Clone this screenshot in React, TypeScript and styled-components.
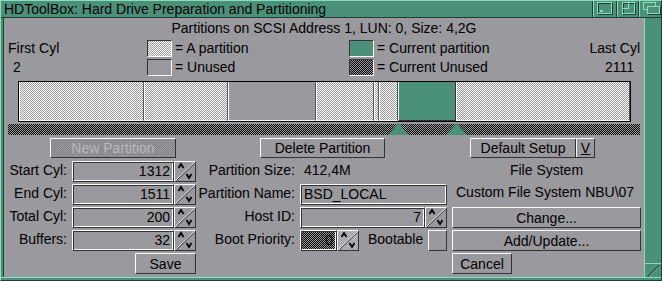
import { Fragment } from 'react';
import styled, { createGlobalStyle, css } from 'styled-components';

const GREY = '#9a999e';
const GREEN = '#4b917a';
const LIGHT = '#8adcbd';
const DARK = '#1f3f34';
const SHADE = '#333333';

const checker = (a: string, b: string) =>
  `repeating-conic-gradient(${a} 0 25%, ${b} 0 50%) 0 0 / 2px 2px`;

const raised = css`
  border-top: 1px solid #fff;
  border-left: 1px solid #fff;
  border-right: 1px solid ${SHADE};
  border-bottom: 1px solid ${SHADE};
`;

const sunken = css`
  border-top: 1px solid ${SHADE};
  border-left: 1px solid ${SHADE};
  border-right: 1px solid #fff;
  border-bottom: 1px solid #fff;
`;

const GlobalStyle = createGlobalStyle`
  body { margin: 0; background: ${GREY}; }
  * { box-sizing: border-box; }
`;

const Window = styled.div`
  width: 662px;
  height: 281px;
  display: flex;
  flex-direction: column;
  background: ${GREEN};
  border-top: 1px solid ${LIGHT};
  border-left: 1px solid ${LIGHT};
  border-right: 1px solid ${DARK};
  border-bottom: 1px solid ${DARK};
  font-family: 'Liberation Sans', Arial, sans-serif;
  font-size: 14px;
  color: #000;
  overflow: hidden;
`;

const TitleBar = styled.div`
  height: 17px;
  display: flex;
  border-bottom: 1px solid ${DARK};
`;

const Title = styled.div`
  flex: 1;
  padding-left: 3px;
  line-height: 16px;
  white-space: nowrap;
`;

const Gadget = styled.div<{ $w: number }>`
  width: ${(p) => p.$w}px;
  height: 16px;
  border-left: 1px solid ${LIGHT};
  box-shadow: -1px 0 0 ${DARK};
  display: flex;
  align-items: center;
  justify-content: center;
`;

const Middle = styled.div`
  display: flex;
  height: 259px;
`;

const LeftBorder = styled.div`
  width: 3px;
  border-right: 1px solid ${DARK};
`;

const RightBorder = styled.div`
  width: 17px;
  border-left: 1px solid ${LIGHT};
  display: flex;
  flex-direction: column;
  justify-content: flex-end;
`;

const SizeGadget = styled.div`
  height: 14px;
  border-top: 1px solid ${LIGHT};
`;

const BottomBorder = styled.div`
  height: 3px;
  border-top: 1px solid ${LIGHT};
`;

const Content = styled.div`
  width: 640px;
  background: ${GREY};
  display: flex;
  flex-direction: column;
`;

const Header = styled.div`
  height: 21px;
  line-height: 21px;
  text-align: center;
  white-space: nowrap;
`;

const Legend = styled.div`
  display: grid;
  grid-template-columns: 143px 202px 1fr auto;
  grid-auto-rows: 19px;
  line-height: 19px;
  height: 38px;
`;

const EndLabel = styled.div<{ $pad: number; $right?: boolean }>`
  padding-left: ${(p) => (p.$right ? 0 : p.$pad)}px;
  padding-right: ${(p) => (p.$right ? p.$pad : 0)}px;
  text-align: ${(p) => (p.$right ? 'right' : 'left')};
`;

const LegendItem = styled.div`
  display: flex;
  align-items: center;
  gap: 3px;
  white-space: nowrap;
`;

type Kind = 'part' | 'free' | 'current' | 'currentFree';

const fills: Record<Kind, string> = {
  part: checker('#fff', GREY),
  free: GREY,
  current: GREEN,
  currentFree: checker('#000', GREY),
};

const Swatch = styled.div<{ $kind: Kind }>`
  width: 25px;
  height: 17px;
  ${sunken}
  background: ${(p) => fills[p.$kind]};
`;

const Bar = styled.div`
  margin: 4px 0 0 14px;
  width: 613px;
  height: 41px;
  border: 1px solid #000;
  display: flex;
`;

const Segment = styled.div<{ $kind: Kind }>`
  height: 39px;
  flex: none;
  background: ${(p) => fills[p.$kind]};
  border-left: 1px solid #fff;
  border-right: 1px solid ${(p) => (p.$kind === 'current' ? SHADE : '#555')};
  border-bottom: 1px solid ${(p) => (p.$kind === 'current' ? SHADE : '#fff')};
`;

const Strip = styled.div`
  position: relative;
  margin: 2px 0 0 4px;
  width: 632px;
  height: 11px;
  background: ${checker('#000', GREY)};
`;

const Marker = styled.svg`
  position: absolute;
  top: -1px;
  width: 21px;
  height: 12px;
`;

const ButtonRow = styled.div`
  display: flex;
  margin: 3px 0 0 46px;
  height: 20px;
`;

const Button = styled.button<{ $w: number; $gap?: number; $ghost?: boolean }>`
  width: ${(p) => p.$w}px;
  height: 100%;
  margin: 0 0 0 ${(p) => p.$gap ?? 0}px;
  padding: 0;
  ${raised}
  background: ${(p) => (p.$ghost ? checker(GREY, '#848388') : GREY)};
  font: inherit;
  line-height: 18px;
  color: ${(p) => (p.$ghost ? '#b9b8bd' : '#000')};
  text-align: center;
  white-space: nowrap;
`;

const Cycle = styled(Button)`
  display: flex;
  padding: 0;
`;

const CycleText = styled.span`
  flex: 1;
  border-right: 1px solid ${SHADE};
`;

const CycleGlyph = styled.span`
  width: 18px;
  border-left: 1px solid #fff;
  text-decoration: underline;
`;

const Form = styled.div`
  display: grid;
  grid-template-columns: 68px 102px 22px 104px 152px 189px;
  grid-auto-rows: 21px;
  row-gap: 2px;
  margin-top: 3px;
`;

const Label = styled.div`
  text-align: right;
  padding-right: 5px;
  line-height: 19px;
  white-space: nowrap;
`;

const Value = styled.div`
  padding-left: 4px;
  line-height: 19px;
`;

const Field = styled.div<{ $w: number; $left?: boolean; $ghost?: boolean }>`
  width: ${(p) => p.$w}px;
  height: 21px;
  ${raised}
  box-shadow: inset 1px 1px 0 ${SHADE}, inset -1px -1px 0 #fff;
  background: ${(p) => (p.$ghost ? checker('#000', GREY) : GREY)};
  padding: 0 3px;
  text-align: ${(p) => (p.$left ? 'left' : 'right')};
  line-height: 19px;
  white-space: nowrap;
`;

const SpinBox = styled.div<{ $ghost?: boolean }>`
  width: 22px;
  height: 21px;
  ${raised}
  background: ${(p) => (p.$ghost ? checker('#c0c0c4', GREY) : GREY)};
`;

const Inline = styled.div`
  display: flex;
  align-items: flex-start;
`;

const Bootable = styled.span`
  margin: 0 5px 0 9px;
  line-height: 19px;
`;

const Check = styled.div`
  width: 19px;
  height: 21px;
  ${raised}
`;

const Centered = styled.div`
  text-align: center;
  line-height: 19px;
`;

const RightText = styled.div`
  padding-left: 4px;
  line-height: 17px;
  white-space: nowrap;
`;

const SideButton = styled(Button)`
  height: 21px;
`;

const SaveCell = styled.div`
  grid-column: 2 / 4;
  display: flex;
  justify-content: flex-end;
`;

const CancelCell = styled.div`
  grid-column: 6;
`;

const Spinner = ({ ghost }: { ghost?: boolean }) => (
  <SpinBox $ghost={ghost}>
    <svg width="20" height="19" viewBox="0 0 20 19">
      <line x1="0.5" y1="18.5" x2="19.5" y2="0.5" stroke="#fff" strokeWidth="1" />
      <line x1="1.5" y1="18.5" x2="19.5" y2="1.5" stroke={SHADE} strokeWidth="1" />
      <polyline points="3.5,6 6,2 8.5,6" fill="none" stroke="#000" strokeWidth="1.8" />
      <polyline points="11.5,12 14,16 16.5,12" fill="none" stroke="#000" strokeWidth="1.8" />
    </svg>
  </SpinBox>
);

const cylFirst = 2;
const cylLast = 2111;
const barPx = 611;

const partitions: { start: number; end: number; kind: Kind }[] = [
  { start: 2, end: 433, kind: 'part' },
  { start: 434, end: 723, kind: 'part' },
  { start: 724, end: 1027, kind: 'free' },
  { start: 1028, end: 1227, kind: 'part' },
  { start: 1228, end: 1244, kind: 'part' },
  { start: 1245, end: 1311, kind: 'part' },
  { start: 1312, end: 1511, kind: 'current' },
  { start: 1512, end: 2111, kind: 'part' },
];

const toPx = (c: number) => Math.round(((c - cylFirst) * barPx) / (cylLast - cylFirst + 1));

const current = partitions.find((p) => p.kind === 'current')!;

const fields = [
  { label: 'Start Cyl:', value: '1312' },
  { label: 'End Cyl:', value: '1511' },
  { label: 'Total Cyl:', value: '200' },
  { label: 'Buffers:', value: '32' },
];

export default function App() {
  return (
    <>
      <GlobalStyle />
      <Window>
        <TitleBar>
          <Title>HDToolBox: Hard Drive Preparation and Partitioning</Title>
          <Gadget $w={24}>
            <svg width="23" height="16" viewBox="0 0 23 16">
              <rect x="4.5" y="2.5" width="14" height="11" fill="none" stroke={DARK} />
              <rect x="3.5" y="1.5" width="14" height="11" fill="none" stroke={LIGHT} />
              <rect x="6" y="9" width="3" height="2" fill={LIGHT} />
            </svg>
          </Gadget>
          <Gadget $w={22}>
            <svg width="21" height="16" viewBox="0 0 21 16">
              <rect x="5.5" y="2.5" width="12" height="11" fill="none" stroke={DARK} />
              <rect x="4.5" y="1.5" width="12" height="11" fill="none" stroke={LIGHT} />
              <rect x="4.5" y="1.5" width="6" height="6" fill="none" stroke={LIGHT} />
            </svg>
          </Gadget>
          <Gadget $w={22}>
            <svg width="21" height="16" viewBox="0 0 21 16">
              <rect x="3.5" y="1.5" width="12" height="7" fill="none" stroke={LIGHT} />
              <rect x="8.5" y="6.5" width="12" height="7" fill={DARK} stroke={DARK} />
              <rect x="7.5" y="5.5" width="12" height="7" fill={GREEN} stroke={LIGHT} />
            </svg>
          </Gadget>
        </TitleBar>
        <Middle>
          <LeftBorder />
          <Content>
            <Header>Partitions on SCSI Address 1, LUN: 0, Size: 4,2G</Header>
            <Legend>
              <EndLabel $pad={4}>First Cyl</EndLabel>
              <LegendItem>
                <Swatch $kind="part" />= A partition
              </LegendItem>
              <LegendItem>
                <Swatch $kind="current" />= Current partition
              </LegendItem>
              <EndLabel $pad={4} $right>
                Last Cyl
              </EndLabel>
              <EndLabel $pad={9}>{cylFirst}</EndLabel>
              <LegendItem>
                <Swatch $kind="free" />= Unused
              </LegendItem>
              <LegendItem>
                <Swatch $kind="currentFree" />= Current Unused
              </LegendItem>
              <EndLabel $pad={10} $right>
                {cylLast}
              </EndLabel>
            </Legend>
            <Bar>
              {partitions.map((p) => (
                <Segment
                  key={p.start}
                  $kind={p.kind}
                  style={{ width: toPx(p.end + 1) - toPx(p.start) }}
                />
              ))}
            </Bar>
            <Strip>
              {[toPx(current.start), toPx(current.end + 1)].map((x) => (
                <Marker key={x} viewBox="0 0 21 12" style={{ left: x + 1 }}>
                  <polygon points="0,12 10.5,0 21,12" fill={GREEN} />
                </Marker>
              ))}
            </Strip>
            <ButtonRow>
              <Button $w={126} $ghost>
                New Partition
              </Button>
              <Button $w={125} $gap={84}>
                Delete Partition
              </Button>
              <Cycle $w={125} $gap={85}>
                <CycleText>Default Setup</CycleText>
                <CycleGlyph>V</CycleGlyph>
              </Cycle>
            </ButtonRow>
            <Form>
              {fields.map((f, i) => (
                <Fragment key={f.label}>
                  <Label>{f.label}</Label>
                  <Field $w={102}>{f.value}</Field>
                  <Spinner />
                  {i === 0 && (
                    <>
                      <Label>Partition Size:</Label>
                      <Value>412,4M</Value>
                      <Centered>File System</Centered>
                    </>
                  )}
                  {i === 1 && (
                    <>
                      <Label>Partition Name:</Label>
                      <Field $w={147} $left>
                        BSD_LOCAL
                      </Field>
                      <RightText>Custom File System NBU\07</RightText>
                    </>
                  )}
                  {i === 2 && (
                    <>
                      <Label>Host ID:</Label>
                      <Inline>
                        <Field $w={125}>7</Field>
                        <Spinner />
                      </Inline>
                      <SideButton $w={189}>Change...</SideButton>
                    </>
                  )}
                  {i === 3 && (
                    <>
                      <Label>Boot Priority:</Label>
                      <Inline>
                        <Field $w={37} $ghost>
                          0
                        </Field>
                        <Spinner ghost />
                        <Bootable>Bootable</Bootable>
                        <Check />
                      </Inline>
                      <SideButton $w={189}>Add/Update...</SideButton>
                    </>
                  )}
                </Fragment>
              ))}
              <SaveCell>
                <SideButton $w={61}>Save</SideButton>
              </SaveCell>
              <CancelCell>
                <SideButton $w={60}>Cancel</SideButton>
              </CancelCell>
            </Form>
          </Content>
          <RightBorder>
            <SizeGadget>
              <svg width="16" height="13" viewBox="0 0 16 13">
                <line x1="3" y1="12.5" x2="14" y2="1.5" stroke={DARK} strokeWidth="1.2" />
                <line x1="4" y1="12.5" x2="14" y2="2.5" stroke={LIGHT} strokeWidth="0.8" />
              </svg>
            </SizeGadget>
          </RightBorder>
        </Middle>
        <BottomBorder />
      </Window>
    </>
  );
}
